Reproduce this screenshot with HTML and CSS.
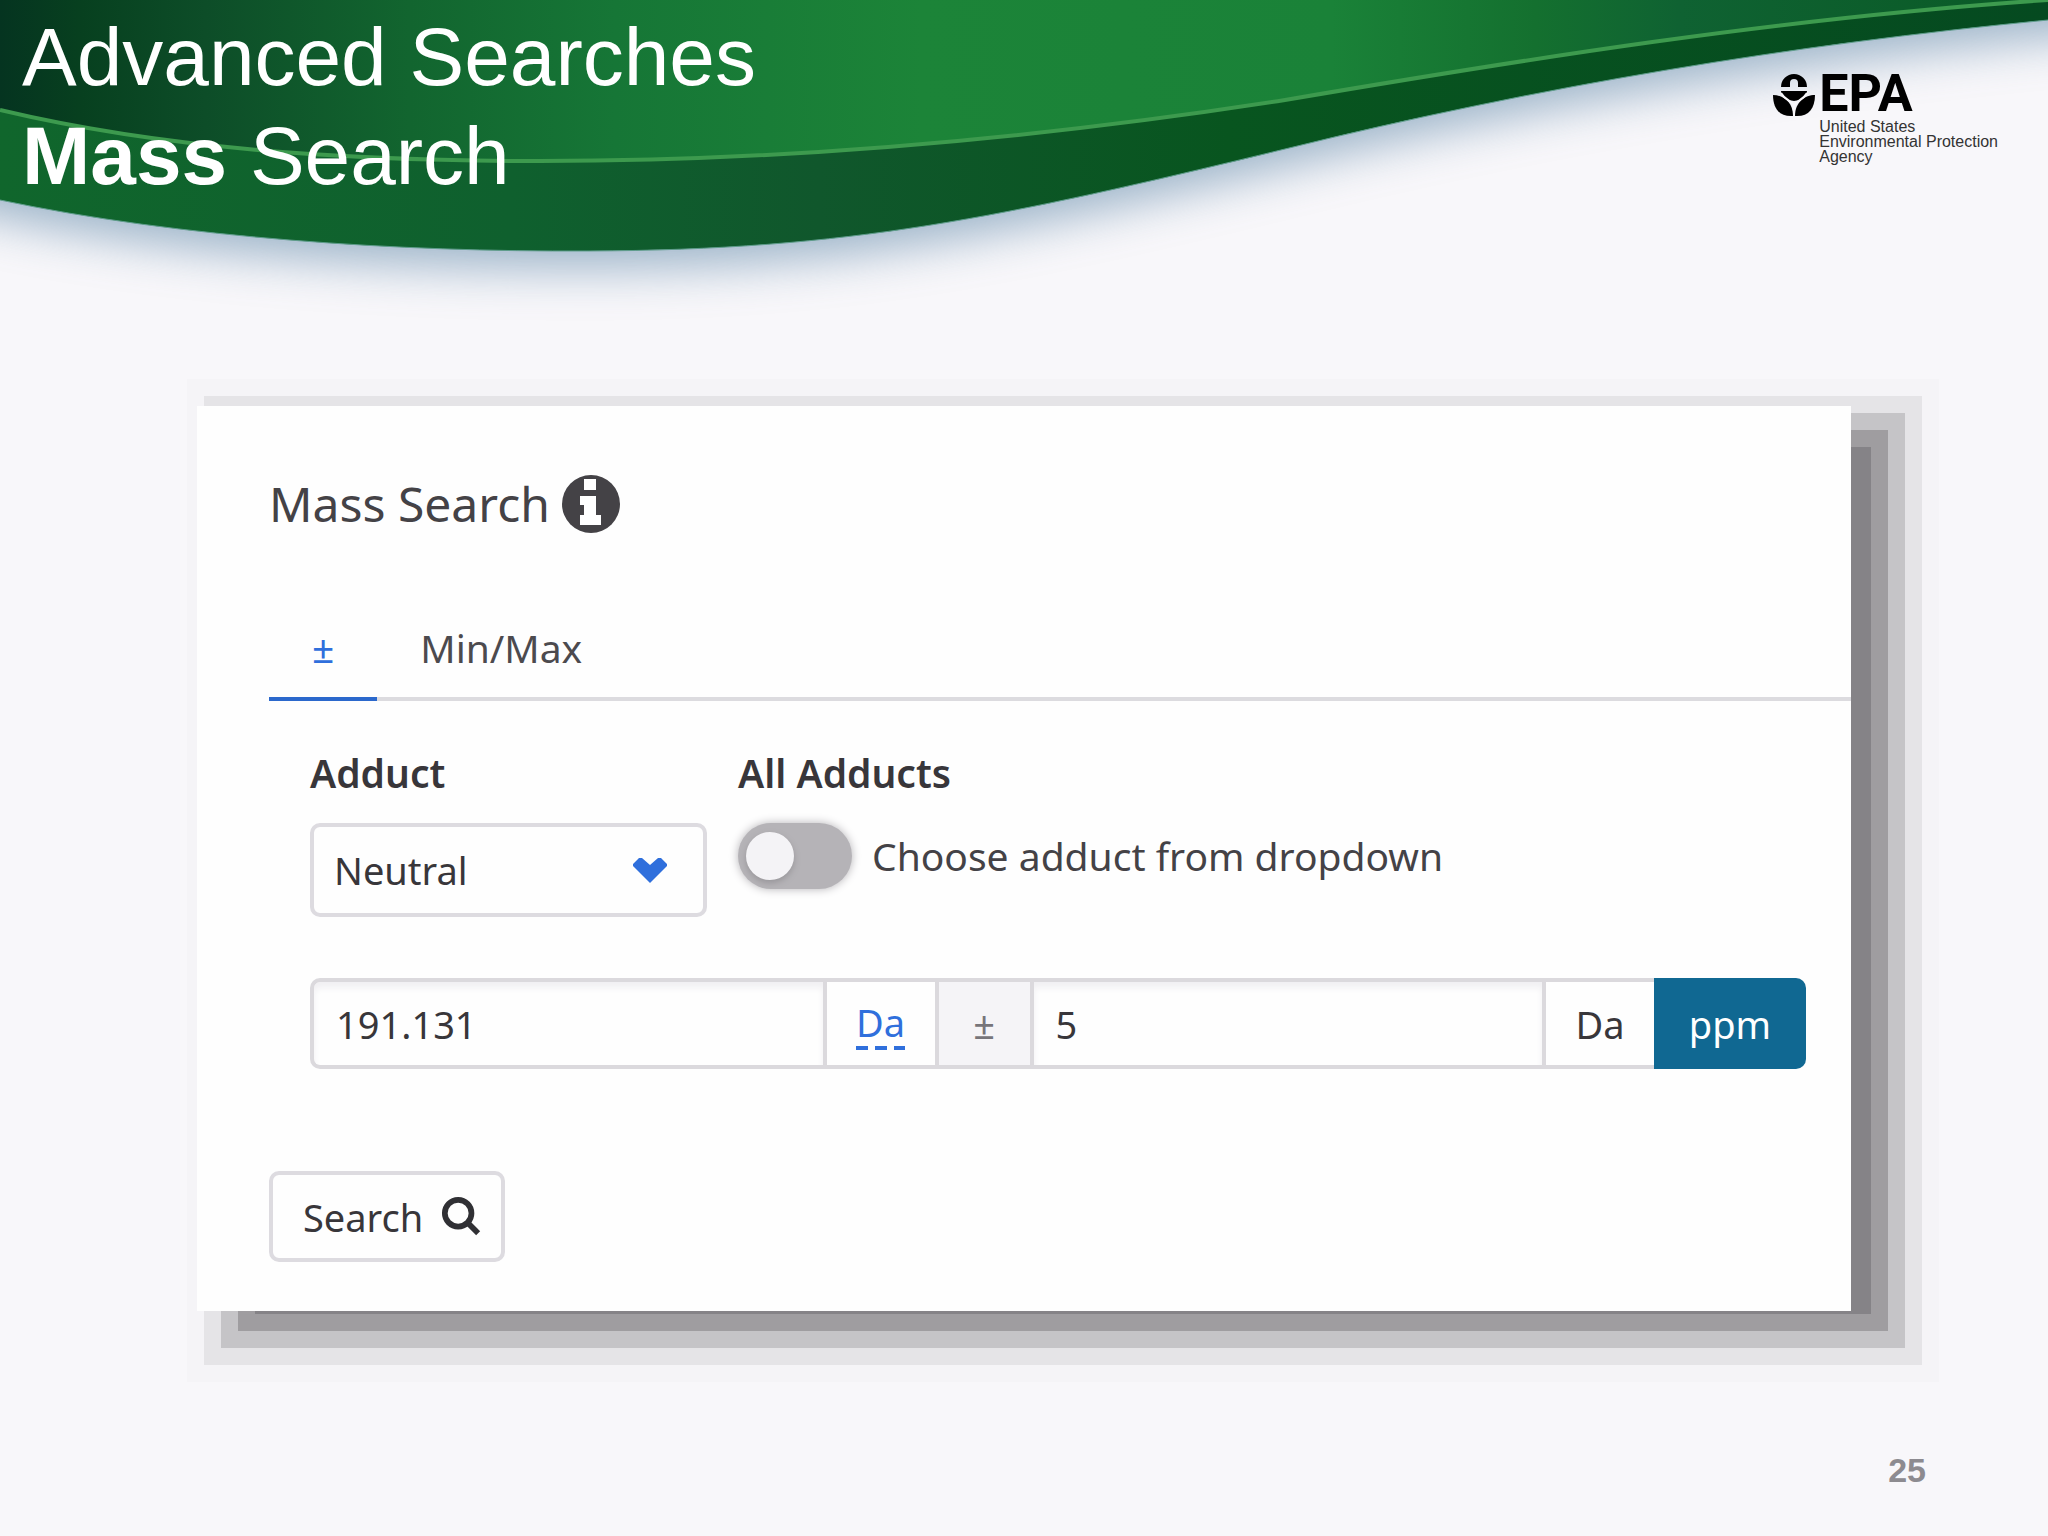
FILE: index.html
```html
<!DOCTYPE html>
<html lang="en">
<head>
<meta charset="utf-8">
<title>Advanced Searches: Mass Search</title>
<link rel="stylesheet" href="styles.css">
</head>
<body>
<header class="banner">
  <svg class="wave" viewBox="0 0 2048 340" preserveAspectRatio="none" aria-hidden="true">
    <defs>
      <linearGradient id="upper" x1="0" x2="1">
        <stop offset="0" stop-color="#053420"/>
        <stop offset=".04" stop-color="#07401f"/>
        <stop offset=".1" stop-color="#0d4d28"/>
        <stop offset=".2" stop-color="#12652f"/>
        <stop offset=".3" stop-color="#167636"/>
        <stop offset=".45" stop-color="#1c8438"/>
        <stop offset=".65" stop-color="#1a8238"/>
        <stop offset=".75" stop-color="#14702f"/>
        <stop offset=".82" stop-color="#0f6232"/>
        <stop offset="1" stop-color="#0a5a26"/>
      </linearGradient>
      <linearGradient id="lower" x1="0" x2="1">
        <stop offset="0" stop-color="#10662c"/>
        <stop offset=".25" stop-color="#0f602e"/>
        <stop offset=".4" stop-color="#10572c"/>
        <stop offset=".6" stop-color="#08551f"/>
        <stop offset="1" stop-color="#054a20"/>
      </linearGradient>
      <filter id="haze" x="-5%" y="-15%" width="110%" height="160%">
        <feGaussianBlur stdDeviation="24"/>
      </filter>
    </defs>
    <path fill="#7597b4" opacity=".7" filter="url(#haze)" d="M-80 -60V195L0 217C180 255 400 269 588 268C850 267 1000 235 1285 166C1540 103 1790 62 2048 37L2130 29V-60Z"/>
    <path fill="url(#lower)" stroke="#5f9d8c" d="M-2 -2V200H0C180 238 400 252 588 251C850 250 1000 218 1285 149C1540 86 1790 45 2048 20H2050V-2Z"/>
    <path fill="url(#upper)" d="M0 0V110C160 148 340 161 540 161C800 161 1060 135 1285 100C1520 60 1780 18 2048 0Z"/>
    <path fill="none" stroke="#3d9a4e" stroke-width="4" d="M0 110C160 148 340 161 540 161C800 161 1060 135 1285 100C1520 60 1780 18 2048 0"/>
  </svg>
  <h1 class="title">Advanced Searches<br><strong>Mass</strong> Search</h1>
  <div class="logo">
    <svg class="emblem" viewBox="0 0 42 44" aria-hidden="true">
      <path d="M8 14A13 13 0 0 1 34 14H25V10A4 4 0 1 0 17 10V14Z"/>
      <path d="M8 18H34A13 10 0 0 1 21 28A13 10 0 0 1 8 18Z"/>
      <path d="M0 22C10 22 20 29 20 43C7 44 0 36 0 22Z"/>
      <path d="M42 22C32 22 22 29 22 43C35 44 42 36 42 22Z"/>
      <path fill="none" stroke="#f8f7fa" stroke-width="2" d="M8 20C12 27 17 27 21 32C25 27 30 27 34 20M21 32V44"/>
    </svg>
    <div class="logo-text">
      <span class="logo-name">EPA</span>
      <span class="logo-agency">United States<br>Environmental Protection<br>Agency</span>
    </div>
  </div>
</header>

<main class="content">
  <form class="card">
    <h2 class="heading">Mass Search
      <svg class="info" viewBox="0 0 58 58" role="img" aria-label="Information">
        <circle cx="29" cy="29" r="29" fill="#444246"/>
        <path fill="#fff" d="M22 4H34V15H22ZM18 21H34V40H39V50H18V40H22V30H18Z"/>
      </svg>
    </h2>
    <nav class="tabs">
      <a class="tab tab-active" href="#plus-minus">±</a>
      <a class="tab" href="#min-max">Min/Max</a>
    </nav>
    <div class="fields">
      <div class="adducts">
        <div class="field">
          <label class="label" for="adduct">Adduct</label>
          <div class="select-wrap">
            <select class="select" id="adduct"><option>Neutral</option></select>
            <svg class="chevron" viewBox="0 0 34 26" aria-hidden="true"><path fill="#2f6fdc" d="M0 7L6 1H9L17 8L25 1H28L34 7V9L17 26L0 9Z"/></svg>
          </div>
        </div>
        <div class="field">
          <span class="label">All Adducts</span>
          <label class="switch-row"><input class="switch" type="checkbox" role="switch"> Choose adduct from dropdown</label>
        </div>
      </div>
      <div class="group">
        <input class="input" type="text" value="191.131" aria-label="Mass">
        <div class="cell unit"><a class="unit-link" href="#unit">Da</a></div>
        <span class="cell sign">±</span>
        <input class="input" type="text" value="5" aria-label="Tolerance">
        <button class="cell unit" type="button">Da</button>
        <button class="cell ppm" type="button">ppm</button>
      </div>
    </div>
    <button class="search" type="button">Search
      <svg class="glass" viewBox="0 0 42 42" aria-hidden="true"><circle cx="18" cy="17" r="14" fill="none" stroke="#303034" stroke-width="6"/><path stroke="#303034" stroke-width="6" d="M28 27L39 38"/></svg>
    </button>
  </form>
</main>
<footer class="footer">25</footer>
</body>
</html>
```
FILE: styles.css
```css
* { box-sizing: border-box; }

body {
  margin: 0;
  min-height: 100vh;
  display: flex;
  flex-direction: column;
  background: #f8f7fa;
  color: #38363a;
  font: 39px/48px "Noto Sans", sans-serif;
}

.banner {
  position: relative;
  display: flex;
  justify-content: space-between;
  align-items: flex-start;
  min-height: 406px;
  padding: 7px 50px 0 22px;
  font-family: "Liberation Sans", sans-serif;
}
.wave {
  position: absolute;
  top: 0;
  left: 0;
  width: 100%;
  height: 340px;
  z-index: -1;
}
.title {
  margin: 0;
  color: #fff;
  font-size: 82px;
  line-height: 99px;
  font-weight: 400;
}

.logo {
  display: flex;
  gap: 4px;
  padding-top: 66px;
  color: #000;
}
.emblem { width: 42px; height: 44px; }
.logo-text { display: flex; flex-direction: column; gap: 4px; }
.logo-name { font: 700 52px/42px Roboto, sans-serif; }
.logo-agency { font-size: 16px; line-height: 15px; color: #333; }

.content { padding: 0 197px; }
.card {
  padding: 68px 0 49px 72px;
  background: #fefefe;
  box-shadow:
    39px 22px 0 -19px #858387,
    39px 22px 0 -2px #9f9da0,
    39px 22px 0 15px #c5c4c7,
    39px 22px 0 32px #e5e4e7,
    39px 22px 0 49px #f5f4f7;
}
.heading {
  display: flex;
  align-items: center;
  gap: 12px;
  margin: 0 0 84px;
  font-size: 48px;
  line-height: 60px;
  font-weight: 400;
  color: #444246;
}
.info { width: 58px; height: 58px; }

.tabs {
  display: flex;
  border-bottom: 4px solid #dcdbdf;
}
.tab {
  margin-bottom: -4px;
  padding: 0 43px 19px;
  border-bottom: 4px solid transparent;
  line-height: 60px;
  color: #4c4a4e;
  text-decoration: none;
}
.tab-active { border-color: #2b68cc; color: #2f6fdc; }

.fields { padding: 48px 45px 102px 41px; }
.adducts { display: flex; gap: 31px; margin-bottom: 61px; }
.field { display: flex; flex-direction: column; gap: 26px; }
.label { font-weight: 600; }

.select-wrap { display: grid; align-items: center; width: 397px; }
.select,
.chevron { grid-area: 1 / 1; }
.select {
  appearance: none;
  width: 100%;
  height: 94px;
  padding: 0 20px;
  border: 4px solid #dddbe0;
  border-radius: 10px;
  background: #fefefe;
  color: inherit;
  font: inherit;
  font-size: 38px;
}
.chevron {
  justify-self: end;
  width: 34px;
  height: 26px;
  margin-right: 40px;
  pointer-events: none;
}

.switch-row { display: flex; align-items: center; gap: 20px; line-height: 66px; color: #444246; }
.switch {
  appearance: none;
  display: flex;
  align-items: center;
  width: 114px;
  height: 66px;
  margin: 0;
  padding: 0 8px;
  border-radius: 33px;
  background: #b5b3b7;
  box-shadow: 0 0 10px #b5b3b7;
}
.switch::before {
  content: "";
  width: 48px;
  height: 48px;
  border-radius: 50%;
  background: #f4f3f6;
  box-shadow: 0 3px 6px #98969a;
}

.group { display: flex; height: 91px; }
.input,
.cell {
  border: 4px solid #dbd9dd;
  border-right-width: 0;
  background: #fefefe;
  color: inherit;
  font: inherit;
  font-size: 38px;
}
.input {
  flex: 1;
  min-width: 0;
  padding: 0 22px;
  box-shadow: inset 0 6px 6px #f1f0f3;
}
.input:first-child { border-radius: 10px 0 0 10px; }
.cell { display: flex; align-items: center; justify-content: center; padding: 0; }
.unit { width: 112px; }
.unit-link {
  padding-bottom: 4px;
  background: repeating-linear-gradient(90deg, #2f6fdc 0 12px, transparent 12px 19px) bottom / 100% 4px no-repeat;
  color: #2f6fdc;
  text-decoration: none;
}
.sign { width: 95px; background: #f5f4f7; color: #77757a; }
.ppm {
  width: 152px;
  border: 0;
  border-radius: 0 10px 10px 0;
  background: #106892;
  color: #fff;
}

.search {
  display: flex;
  align-items: center;
  gap: 18px;
  height: 91px;
  padding: 0 20px 0 30px;
  border: 4px solid #dddbe0;
  border-radius: 10px;
  background: #fefefe;
  color: inherit;
  font: inherit;
  font-size: 38px;
}
.glass { width: 40px; height: 40px; }

.footer {
  margin-top: auto;
  padding: 0 122px 42px;
  text-align: right;
  color: #8d8b90;
  font: 700 34px/48px "Liberation Sans", sans-serif;
}
```
